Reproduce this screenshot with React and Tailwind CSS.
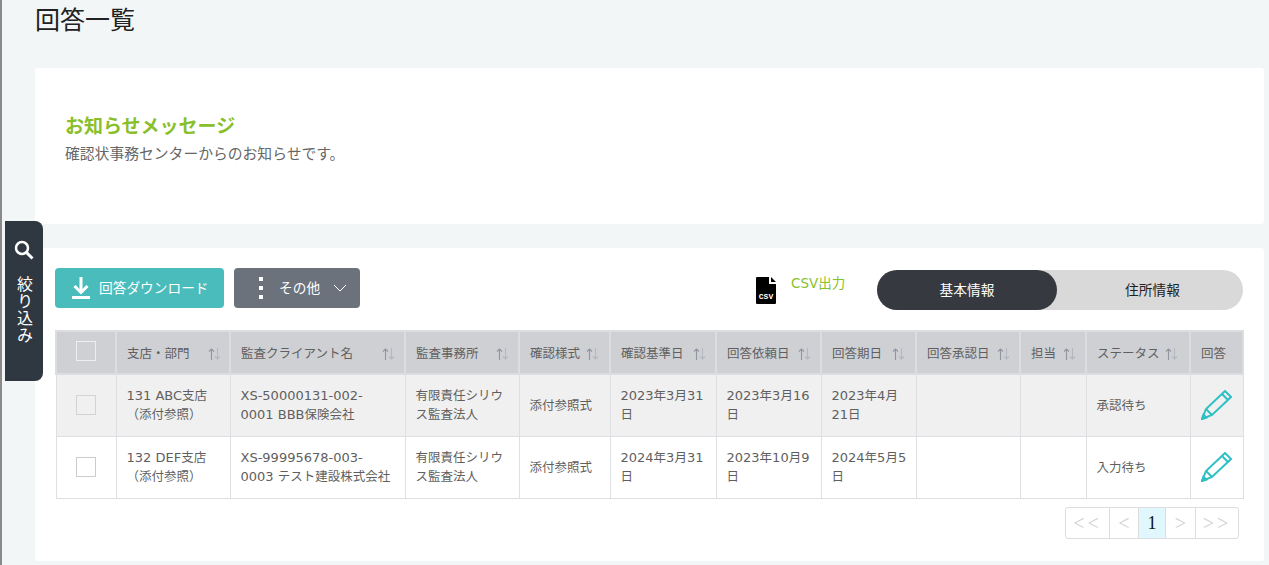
import React from "react";

const cols = [60, 114, 175, 114, 91, 106, 105, 95, 104, 66, 104, 53];

function T({ children }) {
  const parts = String(children).split(/([^\x00-\x7f]+)/);
  return (
    <>
      {parts.map((p, i) =>
        i % 2 === 1 ? <span key={i} className="text-[12.500px]">{p}</span> : <span key={i}>{p}</span>
      )}
    </>
  );
}

function Sort({ className = "" }) {
  return (
    <svg width="13" height="12" viewBox="0 0 13 12" fill="none" className={"absolute " + className}>
      <path d="M3.500 12V1M1 3.500L3.500 1L6 3.500" stroke="#9095a0" strokeWidth="1.1" />
      <path d="M9.500 0V11M7 8.500L9.500 11L12 8.500" stroke="#b4b7bd" strokeWidth="1.1" />
    </svg>
  );
}

function Pencil() {
  return (
    <svg width="31" height="30" viewBox="0 0 31 30" fill="none" stroke="#2fc0c4" strokeWidth="2">
      <path d="M1 29L5 19L24 1L30 7L11 25Z" strokeLinejoin="miter" />
      <path d="M5 19L11 25M21 4L27 10" />
      <path d="M1 29L2.500 24.500L5.500 27.500Z" fill="#2fc0c4" />
    </svg>
  );
}

function Head({ children, sortPos }) {
  return (
    <th className="relative border-2 border-[#dcdde1] bg-[#cfd0d4] p-0 pl-[10px] text-left align-middle text-[12.500px] font-normal text-[#5f5f5f]">
      <span className="relative top-[2px]">{children}</span>
      {sortPos ? <Sort className={sortPos} /> : null}
    </th>
  );
}

function Check({ dim }) {
  return <span className={"mx-auto block h-5 w-5 border " + (dim ? "border-[#d3d3d3] bg-[#f0f0f0]" : "border-[#ccc] bg-white")} />;
}

function Cell({ children, className = "" }) {
  return <td className={"border border-[#dddfe3] pl-[10px] pr-1 align-middle text-[13px] leading-[19px] text-[#5f5f5f] " + className}>{children}</td>;
}

const rows = [
  {
    bg: "bg-[#f0f0f0]",
    dim: true,
    branch: "131 ABC支店",
    client: ["XS-50000131-002-", "0001 BBB保険会社"],
    base: ["2023年3月31", "日"],
    req: ["2023年3月16", "日"],
    due: ["2023年4月", "21日"],
    status: "承認待ち",
  },
  {
    bg: "bg-white",
    dim: false,
    branch: "132 DEF支店",
    client: ["XS-99995678-003-", "0003 テスト建設株式会社"],
    base: ["2024年3月31", "日"],
    req: ["2023年10月9", "日"],
    due: ["2024年5月5", "日"],
    status: "入力待ち",
  },
];

function Two({ v }) {
  return <><T>{v[0]}</T><br /><T>{v[1]}</T></>;
}

export default function App() {
  return (
    <div
      className="relative h-[565px] w-[1269px] overflow-hidden bg-[#f2f6f7] pl-[35px] pr-[5px]"
      style={{ fontFamily: '"DejaVu Sans", "Noto Sans CJK JP", sans-serif' }}
    >
      <div className="absolute bottom-0 left-0 top-0 w-[2px] bg-[#8a8a8a]" />

      <h1 className="h-[68px] pt-[4px] text-[25px] font-normal leading-[34px] text-[#222]">回答一覧</h1>

      <section className="h-[156px] rounded-[3px] bg-white pl-[30px] pt-[45px]">
        <h2 className="text-[19px] font-bold leading-[26px] text-[#8abf2c]">お知らせメッセージ</h2>
        <p className="mt-[5px] text-[14.800px] leading-[20px] text-[#666]">確認状事務センターからのお知らせです。</p>
      </section>

      <section className="mt-[24px] h-[313px] rounded-[3px] bg-white px-[20px] pt-[20px]">
        <div className="flex h-[62px] items-start">
          <button className="flex h-[40px] w-[169px] items-center rounded-[4px] bg-[#4bbcbc] pl-[16px] text-[13.700px] text-white">
            <svg width="20" height="24" viewBox="0 0 20 24" fill="none" stroke="white">
              <path d="M10 1V15" strokeWidth="3" />
              <path d="M3.500 10L10 16.500L16.500 10" strokeWidth="3" />
              <path d="M1 21.500H19" strokeWidth="3" />
            </svg>
            <span className="ml-[8px]">回答ダウンロード</span>
          </button>
          <button className="ml-[10px] flex h-[40px] w-[126px] items-center rounded-[4px] bg-[#6c727c] pl-[25px] text-[13.700px] text-white">
            <span className="flex h-[22px] w-[5px] flex-col justify-between">
              <span className="h-[4px] w-[4px] bg-white" />
              <span className="h-[4px] w-[4px] bg-white" />
              <span className="h-[4px] w-[4px] bg-white" />
            </span>
            <span className="ml-[15px]">その他</span>
            <svg width="14" height="8" viewBox="0 0 14 8" fill="none" stroke="white" className="ml-[13px]">
              <path d="M1 1L7 7L13 1" strokeWidth="1" />
            </svg>
          </button>

          <svg width="20" height="27" viewBox="0 0 20 27" className="ml-[396px] mt-[9px]">
            <path d="M1 0H13V7H20V26A1 1 0 0 1 19 27H1A1 1 0 0 1 0 26V1A1 1 0 0 1 1 0ZM15 0L20 5H15Z" fill="#000" />
            <text x="10" y="22" fontSize="8" fontWeight="700" fill="#fff" textAnchor="middle" fontFamily="Liberation Mono, monospace">CSV</text>
          </svg>
          <span className="ml-[15px] mt-[5px] text-[13.500px] leading-[20px] text-[#8abf2c]">CSV出力</span>

          <div className="ml-auto mr-[1px] mt-[2px] flex h-[40px] w-[366px] rounded-full bg-[#d9d9d9] text-[13.700px]">
            <div className="flex h-full w-[180px] items-center justify-center rounded-full bg-[#363a40] text-white">基本情報</div>
            <div className="flex h-full flex-1 items-center justify-center pl-[5px] text-[#222]">住所情報</div>
          </div>
        </div>

        <table className="w-[1187px] table-fixed border-collapse">
          <colgroup>
            {cols.map((w, i) => <col key={i} style={{ width: w }} />)}
          </colgroup>
          <thead>
            <tr className="h-[43px]">
              <th className="border-2 border-[#dcdde1] bg-[#cfd0d4] p-0 align-top">
                <span className="mx-auto mt-[9px] block h-5 w-5 border border-[#eee]" />
              </th>
              <Head sortPos="right-[8px] top-[16px]">支店・部門</Head>
              <Head sortPos="right-[9px] top-[16px]">監査クライアント名</Head>
              <Head sortPos="right-[9px] top-[16px]">監査事務所</Head>
              <Head sortPos="right-[10px] top-[16px]">確認様式</Head>
              <Head sortPos="right-[9px] top-[16px]">確認基準日</Head>
              <Head sortPos="right-[9px] top-[16px]">回答依頼日</Head>
              <Head sortPos="right-[10px] top-[16px]">回答期日</Head>
              <Head sortPos="right-[9px] top-[16px]">回答承認日</Head>
              <Head sortPos="right-[9px] top-[16px]">担当</Head>
              <Head sortPos="right-[11px] top-[16px]">ステータス</Head>
              <Head>回答</Head>
            </tr>
          </thead>
          <tbody>
            {rows.map((r) => (
              <tr key={r.branch} className={"h-[62px] " + r.bg}>
                <td className="border border-[#dddfe3] align-middle"><Check dim={r.dim} /></td>
                <Cell><T>{r.branch}</T><br /><T>（添付参照）</T></Cell>
                <Cell><Two v={r.client} /></Cell>
                <Cell><T>有限責任シリウ</T><br /><T>ス監査法人</T></Cell>
                <Cell><T>添付参照式</T></Cell>
                <Cell><Two v={r.base} /></Cell>
                <Cell><Two v={r.req} /></Cell>
                <Cell><Two v={r.due} /></Cell>
                <Cell />
                <Cell />
                <Cell><T>{r.status}</T></Cell>
                <td className="border border-[#dddfe3] pl-[10px] align-middle"><Pencil /></td>
              </tr>
            ))}
          </tbody>
        </table>

        <div className="mt-[8px] flex justify-end pr-[5px]">
          <div className="flex h-[32px] overflow-hidden rounded-[3px] border border-[#ddd] text-[20px] leading-[30px] text-[#d0d0d0]" style={{ fontFamily: '"Liberation Serif", serif' }}>
            <span className="w-[44px] border-r border-[#ddd] text-center tracking-[3px]">&lt;&lt;</span>
            <span className="w-[29px] border-r border-[#ddd] text-center">&lt;</span>
            <span className="w-[27px] border-r border-[#ddd] bg-[#e0f7fd] text-center text-[18px] text-[#111]">1</span>
            <span className="w-[30px] border-r border-[#ddd] text-center">&gt;</span>
            <span className="w-[42px] text-center tracking-[3px]">&gt;&gt;</span>
          </div>
        </div>
      </section>

      <aside className="absolute left-[5px] top-[221px] flex h-[160px] w-[38px] flex-col items-center rounded-r-[8px] bg-[#2f3741] pt-[19px] text-white">
        <svg width="20" height="20" viewBox="0 0 20 20" fill="none" stroke="white">
          <circle cx="8" cy="8" r="6" strokeWidth="2.500" />
          <path d="M12.500 12.500L18.500 18.500" strokeWidth="3" />
        </svg>
        <span className="mr-[1px] mt-[16px] text-[16px] leading-[17px] tracking-[1px]" style={{ writingMode: "vertical-rl" }}>絞り込み</span>
      </aside>
    </div>
  );
}
